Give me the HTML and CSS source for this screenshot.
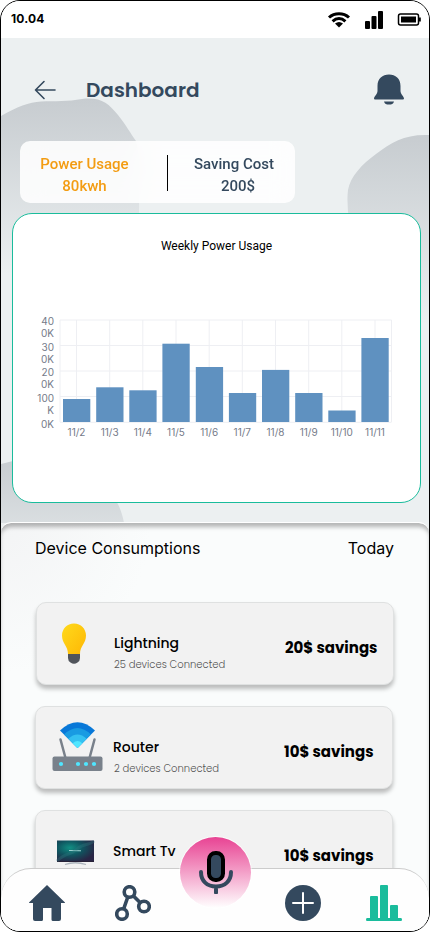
FILE: index.html
```html
<!DOCTYPE html>
<html lang="en">
<head>
<meta charset="utf-8">
<title>Dashboard</title>
<link rel="stylesheet" href="styles.css">
</head>
<body>
<div class="phone">
  <svg class="blobs" width="428" height="485" viewBox="1 38 428 485">
    <defs>
      <linearGradient id="blob" x1="0" y1="0" x2="0" y2="1"><stop offset="0" stop-color="#c7ccd0"/><stop offset="1" stop-color="#ecf0f1"/></linearGradient>
      <linearGradient id="blobLow" gradientUnits="userSpaceOnUse" x1="0" y1="460" x2="0" y2="590"><stop offset="0" stop-color="#c8cdd1"/><stop offset="1" stop-color="#ecf0f1"/></linearGradient>
    </defs>
    <path fill="url(#blob)" d="M1 116C17 107 29 102 41 101.500C55 101 68 101.500 82 99C101 97 108 103 118 115C126 125 131 134 136 141C141 158 139 190 139 215V275H1Z"/>
    <path fill="url(#blob)" d="M429 135C405 134 392 142 376 154C362 164 350 177 348 190C346 206 350 222 350 240V325H429Z"/>
    <path fill="url(#blobLow)" d="M1 464C20 459 36 456 60 453L112 495C118 502 122 512 124 523H1Z"/>
  </svg>
  <header class="status">
    <span>10.04</span>
    <div class="status-icons">
      <svg width="24" height="18" viewBox="0 0 24 18" fill="none" stroke="#000" stroke-width="3"><path d="M2 6.500C7.500 1.500 16.500 1.500 22 6.500M5.600 10.300C9.500 6.700 14.500 6.700 18.400 10.300"/><path d="M8 12.500Q12 9.300 16 12.500L12 16.500Z" fill="#000" stroke="none"/></svg>
      <svg width="18" height="18" viewBox="0 0 18 18"><rect y="10" width="5" height="8" rx="1"/><rect x="6.500" y="5" width="5" height="13" rx="1"/><rect x="13" width="5" height="18" rx="1"/></svg>
      <svg width="24" height="14" viewBox="0 0 24 14"><rect x="1.500" y="1" width="20" height="11" rx="2" fill="none" stroke="#000" stroke-width="1.500"/><rect x="4" y="3.500" width="15" height="6"/><path d="M22 4.500H23.800v4H22Z"/></svg>
    </div>
  </header>
  <div class="title-row">
    <svg class="back" width="22" height="20" viewBox="0 0 22 20" fill="none" stroke="#34495e" stroke-width="1.600" stroke-linecap="round" stroke-linejoin="round"><path d="M21 10H1.500M10 1.500L1.500 10L10 18.500"/></svg>
    <h1>Dashboard</h1>
    <svg class="bell" width="30" height="31" viewBox="0 0 30 31" fill="#34495e"><path d="M3.500 12C3.500 4.500 8.500.500 15 .500S26.500 4.500 26.500 12V17C26.500 20 30 22.500 30 24.500Q30 25.500 29 25.500H1Q0 25.500 0 24.500C0 22.500 3.500 20 3.500 17ZM10 27.500H20C19.500 30 17.500 30.500 15 30.500S10.500 30 10 27.500Z"/></svg>
  </div>
  <div class="summary">
    <div class="usage">Power Usage<br>80kwh</div>
    <div class="divider"></div>
    <div class="cost"><div>Saving Cost</div><div class="amount">200$</div></div>
  </div>
  <section class="chart-card">
    <h2>Weekly Power Usage</h2>
    <svg class="chart" width="370" height="130" viewBox="32 312 370 130">
      <path class="grid" d="M60 320H391.500M60 345.500H391.500M60 371H391.500M60 396.500H391.500M60 422.300H391.500M60 320V422M76.500 320V422M109.700 320V422M142.800 320V422M176 320V422M209.200 320V422M242.300 320V422M275.500 320V422M308.700 320V422M341.800 320V422M375 320V422M391.500 320V422"/>
      <g fill="#5f91c0">
        <rect x="63" y="399" width="27.300" height="23"/>
        <rect x="96.200" y="387.300" width="27.300" height="34.700"/>
        <rect x="129.300" y="390.300" width="27.300" height="31.700"/>
        <rect x="162.400" y="343.700" width="27.300" height="78.300"/>
        <rect x="195.800" y="367" width="27.300" height="55"/>
        <rect x="228.900" y="393" width="27.300" height="29"/>
        <rect x="262" y="369.900" width="27.300" height="52.100"/>
        <rect x="295.200" y="393" width="27.300" height="29"/>
        <rect x="328.300" y="410.500" width="27.300" height="11.500"/>
        <rect x="361.400" y="338" width="27.300" height="84"/>
      </g>
      <g class="ylabels">
        <text x="54" y="325">40</text><text x="54" y="337">0K</text>
        <text x="54" y="350.500">30</text><text x="54" y="362.500">0K</text>
        <text x="54" y="376">20</text><text x="54" y="388">0K</text>
        <text x="54" y="402">100</text><text x="54" y="414">K</text>
        <text x="54" y="427.500">0K</text>
      </g>
      <g class="xlabels">
        <text x="76.500" y="435.500">11/2</text><text x="109.700" y="435.500">11/3</text><text x="142.800" y="435.500">11/4</text><text x="176" y="435.500">11/5</text><text x="209.200" y="435.500">11/6</text><text x="242.300" y="435.500">11/7</text><text x="275.500" y="435.500">11/8</text><text x="308.700" y="435.500">11/9</text><text x="341.800" y="435.500">11/10</text><text x="375" y="435.500">11/11</text>
      </g>
    </svg>
  </section>
  <section class="sheet">
    <div class="sheet-head"><span>Device Consumptions</span><span>Today</span></div>
    <div class="devices">
      <article class="device first">
        <svg class="pic" width="52" height="52" viewBox="48 618 52 52"><defs><linearGradient id="bulb" x1="0" y1="0" x2="1" y2="1"><stop offset="0" stop-color="#ffda1c"/><stop offset="1" stop-color="#feb705"/></linearGradient></defs><path fill="url(#bulb)" d="M74 624.500C67 624.500 62 630 62 636.500C62 644.500 68 647 68 655H80C80 647 86 644.500 86 636.500C86 630 81 624.500 74 624.500Z"/><path fill="#50545b" d="M68 655H80V659Q80 662 77.500 663.500Q74 666 70.500 663.500Q68 662 68 659Z"/></svg>
        <div class="info"><h3>Lightning</h3><p>25 devices Connected</p></div>
        <strong>20$ savings</strong>
      </article>
      <article class="device">
        <svg class="pic" width="52" height="52" viewBox="52 721 52 52"><path fill="#0878d8" d="M60 730.500Q77.500 714 95 730.500L77.500 748Z"/><path fill="#199be2" d="M64 734.500Q77.500 721.500 91 734.500L77.500 748Z"/><path fill="#35c1f1" d="M68.300 738.800Q77.500 730 86.700 738.800L77.500 748Z"/><path fill="#50e6ff" d="M72.700 743.200Q77.500 739 82.300 743.200L77.500 748Z"/><path d="M60.500 739.500L65.500 758M94.500 739.500L89.500 758" stroke="#79818b" stroke-width="2.500" stroke-linecap="round"/><rect x="52.500" y="756.500" width="50" height="14.500" rx="2" fill="#79818b"/><g fill="#50e6ff"><circle cx="61" cy="764" r="2.100"/><circle cx="78" cy="764" r="2.100"/><circle cx="86" cy="764" r="2.100"/><circle cx="94" cy="764" r="2.100"/></g></svg>
        <div class="info"><h3>Router</h3><p>2 devices Connected</p></div>
        <strong>10$ savings</strong>
      </article>
      <article class="device">
        <svg class="pic" width="52" height="52" viewBox="52 825 52 52"><defs><radialGradient id="screen" cx=".35" cy=".35" r=".7"><stop offset="0" stop-color="#128f83"/><stop offset=".5" stop-color="#10545f"/><stop offset="1" stop-color="#292545"/></radialGradient></defs><rect x="57" y="840.500" width="37" height="21" fill="url(#screen)"/><path d="M57 861.500H94" stroke="#282238"/><path d="M69 850.500L81 850.800" stroke="#9fd4d2"/><path d="M57 861C67 851 71 856 77 849C83 843 89 846 94 841" fill="none" stroke="#317b82" stroke-opacity=".35" stroke-width="3"/><path d="M65 864.500Q75 861 86 864.500" fill="none" stroke="#abb3bb" stroke-width="1.300"/></svg>
        <div class="info"><h3>Smart Tv</h3></div>
        <strong>10$ savings</strong>
      </article>
    </div>
  </section>
  <nav class="tabs">
    <svg width="36" height="36" viewBox="0 0 36 36" fill="#34495e"><path d="M18 0L36 17.500Q36 18 35.500 18H32V34Q32 36 30 36H24Q22.500 36 22.500 34.500V23H14V34.500Q14 36 12.500 36H6Q4 36 4 34V18H.500Q0 18 0 17.500Z"/></svg>
    <svg class="nodes" width="36" height="36" viewBox="0 0 36 36" fill="none" stroke="#34495e" stroke-width="3.600"><circle cx="14.500" cy="7" r="5.300"/><circle cx="29" cy="21.500" r="5.300"/><circle cx="7" cy="29" r="5.300"/><path d="M12.800 12L8.800 23.500M18.500 11L25 17.500"/></svg>
    <svg class="add" width="36" height="36" viewBox="0 0 36 36"><circle cx="18" cy="18" r="18" fill="#34495e"/><path d="M18 8V28M8 18H28" stroke="#fff" stroke-width="2" stroke-linecap="round"/></svg>
    <svg class="stats" width="36" height="36" viewBox="0 0 36 36" fill="#1abc9c"><path d="M4 12Q4 11 5 11H11Q12 11 12 12V33H14V1Q14 0 15 0H21Q22 0 22 1V33H24V21Q24 20 25 20H31Q32 20 32 21V33H35Q36 33 36 34.500T35 36H1Q0 36 0 34.500T1 33H4Z"/></svg>
  </nav>
  <div class="mic">
    <svg width="36" height="44" viewBox="198 850 36 44" fill="none"><rect x="209" y="853" width="14" height="27" rx="6.500" fill="#34495e" stroke="#000" stroke-width="4"/><path d="M201 872C201 881 207 886.500 216 886.500S231 881 231 872M216 887V892.500" stroke="#34495e" stroke-width="4" stroke-linecap="round"/></svg>
  </div>
</div>
</body>
</html>
```
FILE: styles.css
```css
* { box-sizing: border-box; }
body { margin: 0; background: #fff; font-family: Inter, "Liberation Sans", sans-serif; }
h1, h2, h3, p { margin: 0; }
svg { display: block; flex: none; }
.phone { position: relative; width: 430px; height: 932px; border: 1px solid #000; border-radius: 20px; overflow: hidden; background: #ecf0f1; display: flex; flex-direction: column; }
.blobs { position: absolute; left: 0; top: 37px; }
.phone > header, .title-row, .summary, .chart-card, .sheet { position: relative; flex: none; }
.status { height: 37px; background: #fff; display: flex; justify-content: space-between; padding: 0 8px 0 10px; line-height: 36px; font-size: 12px; font-weight: 700; letter-spacing: .15px; }
.status-icons { display: flex; align-items: center; gap: 14px; }
.title-row { height: 103px; display: flex; padding: 0 25px 0 33px; }
.back { margin-top: 42px; }
h1 { margin: 36px auto 0 30px; font: 600 20px/32px Poppins, Inter, sans-serif; color: #34495e; }
.bell { margin-top: 36px; }
.summary { width: 275px; height: 62px; margin-left: 19px; border-radius: 10px; background: rgba(255,255,255,.87); backdrop-filter: blur(12px); display: flex; text-align: center; font: 500 15px/22px Roboto, sans-serif; }
.usage { width: 129px; padding-top: 12px; color: #f39c12; }
.divider { width: 1px; height: 36px; margin: 14px 0 0 18px; background: #000; }
.cost { width: 108px; margin-left: 12px; padding-top: 12px; color: #34495e; }
.amount { padding-left: 8px; }
.chart-card { width: 409px; height: 290px; margin: 10px 0 0 11px; border: 1px solid #1abc9c; border-radius: 20px; background: #fff; }
h2 { padding-top: 25px; font: 400 12px/15px Roboto, sans-serif; text-align: center; }
.chart { margin: 58px 0 0 19px; }
.grid { fill: none; stroke: #eeeff3; stroke-width: 1; }
.ylabels, .xlabels { font: 10px Inter, sans-serif; fill: #757b89; }
.ylabels { text-anchor: end; }
.xlabels { text-anchor: middle; }
.sheet { height: 409px; margin-top: 19px; border-top: 1px solid #fff; border-radius: 10px 10px 0 0; background: radial-gradient(circle at 0 0, #f3f4f5, #fafcfc 150px); box-shadow: inset 0 5px 4px -1px rgba(0,0,0,.28); }
.sheet-head { display: flex; justify-content: space-between; padding: 13px 35px 0 34px; font-size: 16px; line-height: 24px; }
.devices { display: flex; flex-direction: column; gap: 21px; padding: 42px 36px 0 34px; }
.device { height: 83px; border: 1px solid #dfe1e1; border-radius: 10px; background: #f2f2f2; box-shadow: 0 4px 4px rgba(0,0,0,.25); display: flex; padding-left: 16px; }
.device.first { margin: 0 -1px 0 1px; padding-left: 11px; }
.pic { margin-top: 14px; }
.info { width: 150px; padding-top: 29px; margin-left: 9px; white-space: nowrap; }
.first .info { margin-left: 14px; }
h3 { font: 500 14px/22px Poppins, Inter, sans-serif; }
.info p { margin-top: 2px; padding-left: 1px; font: 300 10px/18px Poppins, Inter, sans-serif; color: #555; }
.first .info p { padding-left: 0; }
.device strong { margin: 34px 14px 0 auto; width: 94px; white-space: nowrap; font: 700 15px/22px Poppins, Inter, sans-serif; }
.tabs { position: absolute; left: 0; right: 0; bottom: 0; height: 63px; border-top: 1px solid #ccc; border-radius: 30px 30px 0 0; background: #fefefe; display: flex; padding: 16px 27px 0 28px; }
.nodes { margin-left: 50px; }
.add { margin-left: auto; }
.stats { margin-left: 45px; }
.mic { position: absolute; left: 179px; top: 836px; width: 71px; height: 71px; border-radius: 50%; background: linear-gradient(#e84393, #fff); box-shadow: 0 0 0 1px rgba(255,255,255,.7); display: flex; justify-content: center; padding-top: 13px; }
```
